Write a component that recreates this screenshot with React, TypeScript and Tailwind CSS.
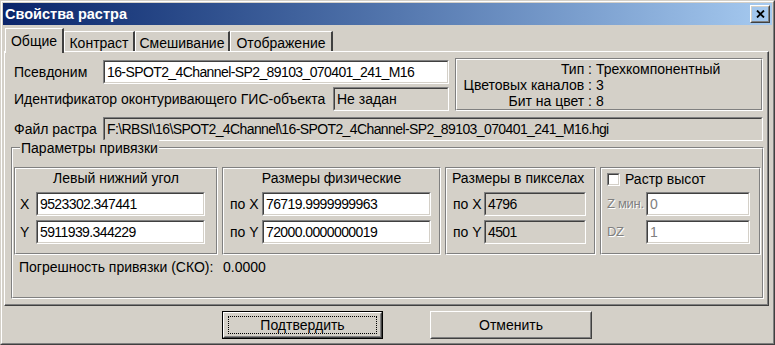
import React from 'react'

// Win2k-style "Свойства растра" dialog

function Field({
  value,
  className = '',
  gray = false,
  dim = false,
  mono = true,
}: {
  value: string
  className?: string
  gray?: boolean
  dim?: boolean
  mono?: boolean
}) {
  return (
    <div
      className={`border border-t-[#808080] border-l-[#808080] border-b-white border-r-white ${className}`}
    >
      <div
        className={`flex h-full items-center overflow-hidden whitespace-nowrap border border-t-[#404040] border-l-[#404040] border-b-[#d4d0c8] border-r-[#d4d0c8] pl-[2px] text-[14px] ${
          gray ? 'bg-[#d4d0c8]' : 'bg-white'
        } ${dim ? 'text-[#808080]' : 'text-black'} ${mono ? 'tracking-[-0.6px]' : ''}`}
      >
        {value}
      </div>
    </div>
  )
}

function Etched({
  children,
  className = '',
}: {
  children?: React.ReactNode
  className?: string
}) {
  return (
    <div
      className={`border border-t-[#808080] border-l-[#808080] border-b-white border-r-white ${className}`}
    >
      <div className="h-full border border-t-white border-l-white border-b-[#808080] border-r-[#808080]">
        {children}
      </div>
    </div>
  )
}

function Raised({
  children,
  className = '',
}: {
  children?: React.ReactNode
  className?: string
}) {
  return (
    <div
      className={`border border-t-white border-l-white border-b-[#404040] border-r-[#404040] ${className}`}
    >
      <div className="flex h-full items-center justify-center border border-t-[#d4d0c8] border-l-[#d4d0c8] border-b-[#808080] border-r-[#808080]">
        {children}
      </div>
    </div>
  )
}

function Row({
  label,
  labelW,
  value,
  fieldW,
  gray,
  dim,
  labelDim,
  className = '',
}: {
  label: string
  labelW: string
  value: string
  fieldW: string
  gray?: boolean
  dim?: boolean
  labelDim?: boolean
  className?: string
}) {
  return (
    <div className={`flex h-[24px] items-center ${className}`}>
      <span
        className={`${labelW} whitespace-nowrap ${
          labelDim ? 'text-[13px] tracking-[-0.3px] text-[#808080] [text-shadow:1px_1px_0_#fff]' : ''
        }`}
      >
        {label}
      </span>
      <Field value={value} className={`${fieldW} h-[24px]`} gray={gray} dim={dim} />
    </div>
  )
}

const tabs = [
  { name: 'Общие', w: 'w-[59px]' },
  { name: 'Контраст', w: 'w-[71px]' },
  { name: 'Смешивание', w: 'w-[95px]' },
  { name: 'Отображение', w: 'w-[103px]' },
]

export default function App() {
  return (
    <div className="h-[345px] w-[775px] border border-t-[#d4d0c8] border-l-[#d4d0c8] border-b-[#404040] border-r-[#404040] bg-[#d4d0c8] font-['Liberation_Sans',Arial,sans-serif] text-[14px] leading-[16px] text-black">
      <div className="h-full border border-t-white border-l-white border-b-[#808080] border-r-[#808080] p-[1px]">
        {/* title bar */}
        <div className="flex h-[22px] items-center justify-between bg-gradient-to-r from-[#0a246a] to-[#a6caf0] pl-[2px] pr-[2px]">
          <span className="text-[14.5px] font-bold text-white">Свойства растра</span>
          <Raised className="h-[18px] w-[20px]">
            <svg width="9" height="8" viewBox="0 0 9 8">
              <path d="M1 0.5 L8 7.5 M8 0.5 L1 7.5" stroke="#000" strokeWidth="1.8" />
            </svg>
          </Raised>
        </div>

        {/* tabs */}
        <div className="relative z-10 ml-[2px] flex h-[26px] items-end">
          {tabs.map((t, i) =>
            i === 0 ? (
              <div
                key={t.name}
                className={`${t.w} -mb-[2px] flex h-[25px] items-start justify-center border-l border-t border-r-2 border-l-white border-t-white border-r-[#404040] bg-[#d4d0c8] pt-[4px]`}
              >
                {t.name}
              </div>
            ) : (
              <div
                key={t.name}
                className={`${t.w} flex h-[20px] items-center justify-center border-l border-t border-r-2 border-l-white border-t-white border-r-[#404040] pt-[3px]`}
              >
                {t.name}
              </div>
            )
          )}
        </div>

        {/* tab panel */}
        <div className="ml-[1px] h-[255px] w-[765px] border border-t-white border-l-white border-b-[#404040] border-r-[#404040]">
          <div className="h-full border-b border-r border-b-[#808080] border-r-[#808080]">
            <div className="flex items-start pl-[9px] pt-[6px]">
              <div className="w-[435px]">
                <Row
                  className="mt-[2px]"
                  label="Псевдоним"
                  labelW="w-[89px]"
                  value="16-SPOT2_4Channel-SP2_89103_070401_241_M16"
                  fieldW="w-[346px]"
                />
                <div className="mt-[3px] flex h-[24px] items-center">
                  <span className="flex-1 whitespace-nowrap">
                    Идентификатор оконтуривающего ГИС-объекта
                  </span>
                  <Field
                    value="Не задан"
                    className="h-[24px] w-[116px]"
                    gray
                    mono={false}
                  />
                </div>
              </div>
              <Etched className="ml-[6px] h-[53px] w-[308px]">
                <div className="pt-[1px]">
                  {[
                    ['Тип :', 'Трехкомпонентный'],
                    ['Цветовых каналов :', '3'],
                    ['Бит на цвет :', '8'],
                  ].map(([k, v]) => (
                    <div key={k} className="flex h-[16px] items-center whitespace-nowrap">
                      <span className="w-[135px] text-right">{k}</span>
                      <span className="pl-[4px]">{v}</span>
                    </div>
                  ))}
                </div>
              </Etched>
            </div>

            <Row
              className="mt-[6px] pl-[9px]"
              label="Файл растра"
              labelW="w-[89px]"
              value="F:\RBSI\16\SPOT2_4Channel\16-SPOT2_4Channel-SP2_89103_070401_241_M16.hgi"
              fieldW="w-[660px]"
              gray
            />

            {/* group box */}
            <div className="relative ml-[6px] mt-[6px] w-[753px]">
              <span className="absolute left-[9px] top-[-7px] bg-[#d4d0c8] pl-[1px] pr-[1px]">
                Параметры привязки
              </span>
              <Etched className="h-[152px] w-[753px]">
                <div className="flex gap-[4px] pl-[1px] pt-[18px]">
                  <Etched className="h-[88px] w-[204px]">
                    <div className="h-[18px] pt-[1px] text-center">Левый нижний угол</div>
                    <div className="pl-[4px]">
                      <Row className="mt-[5px]" label="X" labelW="w-[16px]" value="9523302.347441" fieldW="w-[169px]" />
                      <Row className="mt-[4px]" label="Y" labelW="w-[16px]" value="5911939.344229" fieldW="w-[169px]" />
                    </div>
                  </Etched>
                  <Etched className="h-[88px] w-[219px]">
                    <div className="h-[18px] pt-[1px] text-center">Размеры физические</div>
                    <div className="pl-[6px]">
                      <Row className="mt-[5px]" label="по X" labelW="w-[32px]" value="76719.9999999963" fieldW="w-[169px]" />
                      <Row className="mt-[4px]" label="по Y" labelW="w-[32px]" value="72000.0000000019" fieldW="w-[169px]" />
                    </div>
                  </Etched>
                  <Etched className="h-[88px] w-[151px]">
                    <div className="h-[18px] whitespace-nowrap pl-[5px] pt-[1px]">Размеры в пикселах</div>
                    <div className="pl-[6px]">
                      <Row className="mt-[5px]" label="по X" labelW="w-[31px]" value="4796" fieldW="w-[102px]" gray />
                      <Row className="mt-[4px]" label="по Y" labelW="w-[31px]" value="4501" fieldW="w-[102px]" gray />
                    </div>
                  </Etched>
                  <Etched className="h-[88px] w-[161px]">
                    <div className="flex h-[18px] items-center pl-[5px] pt-[2px]">
                      <div className="h-[13px] w-[13px] border border-t-[#808080] border-l-[#808080] border-b-white border-r-white">
                        <div className="h-full border border-t-[#404040] border-l-[#404040] border-b-[#d4d0c8] border-r-[#d4d0c8] bg-white" />
                      </div>
                      <span className="pl-[5px]">Растр высот</span>
                    </div>
                    <div className="pl-[5px]">
                      <Row className="mt-[5px]" label="Z мин." labelW="w-[39px]" value="0" fieldW="w-[104px]" dim labelDim />
                      <Row className="mt-[4px]" label="DZ" labelW="w-[39px]" value="1" fieldW="w-[104px]" dim labelDim />
                    </div>
                  </Etched>
                </div>
                <div className="mt-[4px] flex h-[16px] items-center pl-[6px]">
                  <span className="w-[204px]">Погрешность привязки (СКО):</span>
                  <span>0.0000</span>
                </div>
              </Etched>
            </div>
          </div>
        </div>

        {/* buttons */}
        <div className="mt-[5px] flex pl-[219px]">
          <div className="h-[28px] w-[161px] border border-black">
            <Raised className="h-full w-full">
              <div className="flex h-[18px] w-[149px] items-center justify-center border border-dotted border-black">
                Подтвердить
              </div>
            </Raised>
          </div>
          <Raised className="ml-[47px] h-[28px] w-[162px]">Отменить</Raised>
        </div>
      </div>
    </div>
  )
}
